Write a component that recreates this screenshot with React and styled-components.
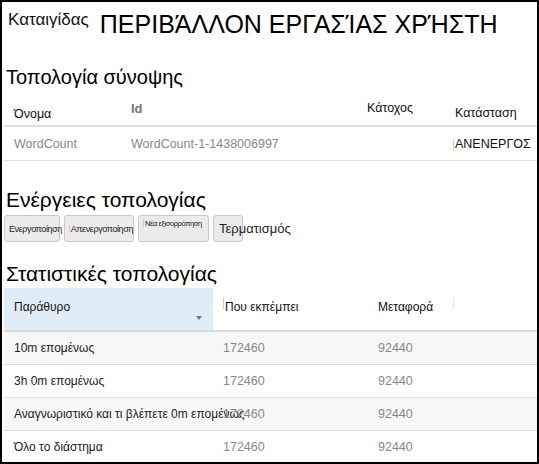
import React from "react";
import styled, { createGlobalStyle } from "styled-components";

const GlobalStyle = createGlobalStyle`
  html, body {
    margin: 0;
    padding: 0;
    background: #fff;
  }
  body {
    font-family: "Liberation Sans", Arial, sans-serif;
    color: #222;
  }
`;

const Frame = styled.div`
  height: 464px;
  box-sizing: border-box;
  border: 2px solid #000;
  padding: 8px 0 0 2px;
  overflow: hidden;
`;

const TitleBar = styled.div`
  display: flex;
  align-items: flex-start;
  margin-left: 4px;
`;

const Brand = styled.span`
  font-size: 17px;
  line-height: 20px;
  color: #111;
`;

const PageTitle = styled.h1`
  margin: 0 0 0 11px;
  font-size: 25px;
  font-weight: normal;
  line-height: 28px;
  color: #000;
`;

const SectionTitle = styled.h2`
  margin: ${(p) => p.$top}px 0 0 2px;
  font-size: ${(p) => p.$size || 20}px;
  font-weight: normal;
  line-height: 24px;
  color: #000;
`;

const Caret = styled.span`
  display: inline-block;
  width: 1px;
  height: ${(p) => p.$h || 10}px;
  margin-right: 1px;
  background: ${(p) => p.$color || "#f3c48c"};
  vertical-align: middle;
`;

/* summary table */
const SummaryHead = styled.div`
  display: grid;
  grid-template-columns: 117px 236px 88px 1fr;
  height: 30px;
  margin-top: 6px;
  border-bottom: 2px solid #ddd;
`;

const SummaryHeadCell = styled.div`
  padding: ${(p) => p.$pad}px 10px 0;
  font-size: ${(p) => (p.$bold ? 13 : 12.5)}px;
  font-weight: ${(p) => (p.$bold ? "bold" : "normal")};
  line-height: 18px;
  color: ${(p) => (p.$bold ? "#777" : "#111")};
`;

const SummaryRow = styled.div`
  display: grid;
  grid-template-columns: 117px 236px 88px 1fr;
  height: 33px;
  border-bottom: 1px solid #ddd;
`;

const SummaryCell = styled.div`
  padding: 8px 10px 0;
  font-size: 12.5px;
  line-height: 18px;
  white-space: nowrap;
  color: ${(p) => (p.$dark ? "#111" : "#888")};
`;

/* actions */
const ActionBar = styled.div`
  display: flex;
  gap: 4px;
  margin-top: 3px;
`;

const ActionButton = styled.button`
  box-sizing: border-box;
  width: ${(p) => p.$w}px;
  height: 27px;
  margin: 0;
  padding: ${(p) => (p.$top ? 3 : 0)}px 0 0 4px;
  display: flex;
  align-items: ${(p) => (p.$top ? "flex-start" : "center")};
  background: #ebebeb;
  border: 1px solid #c9c9c9;
  border-radius: 3px;
  font-family: inherit;
  font-size: ${(p) => p.$size}px;
  letter-spacing: ${(p) => (p.$size < 10 ? "-0.4px" : "0")};
  color: #222;
  white-space: nowrap;
  overflow: visible;
  text-align: left;
`;

/* stats table */
const StatsHead = styled.div`
  display: grid;
  grid-template-columns: 209px 155px 81px 1fr;
  height: 42px;
  margin-top: 2px;
  border-bottom: 2px solid #d9d9d9;
`;

const StatsHeadCell = styled.div`
  position: relative;
  display: flex;
  align-items: flex-start;
  padding: 10px;
  font-size: 12px;
  line-height: 18px;
  color: #111;
  background: ${(p) => (p.$active ? "#e1edf6" : "transparent")};
`;

const SortArrow = styled.span`
  position: absolute;
  right: 11px;
  bottom: 10px;
  width: 0;
  height: 0;
  border-left: 3.5px solid transparent;
  border-right: 3.5px solid transparent;
  border-top: 4px solid #777;
`;

const StatsRow = styled.div`
  display: grid;
  grid-template-columns: 209px 155px 81px 1fr;
  height: 32px;
  border-bottom: 1px solid #ddd;
  background: ${(p) => (p.$striped ? "#f7f7f7" : "#fff")};
`;

const StatsCell = styled.div`
  display: flex;
  align-items: center;
  padding: 0 10px;
  white-space: nowrap;
  font-size: ${(p) => (p.$label ? 12 : 12.5)}px;
  color: ${(p) => (p.$label ? "#222" : "#888")};
`;

const stats = [
  { label: "10m επομένως", emitted: "172460", transferred: "92440" },
  { label: "3h 0m επομένως", emitted: "172460", transferred: "92440" },
  { label: "Αναγνωριστικό και τι βλέπετε 0m επομένως", emitted: "172460", transferred: "92440" },
  { label: "Όλο το διάστημα", emitted: "172460", transferred: "92440" },
];

export default function App() {
  return (
    <Frame>
      <GlobalStyle />
      <TitleBar>
        <Brand>Καταιγίδας</Brand>
        <PageTitle>ΠΕΡΙΒΆΛΛΟΝ ΕΡΓΑΣΊΑΣ ΧΡΉΣΤΗ</PageTitle>
      </TitleBar>

      <SectionTitle $top={27}>Τοπολογία σύνοψης</SectionTitle>
      <SummaryHead>
        <SummaryHeadCell $pad={10}>Όνομα</SummaryHeadCell>
        <SummaryHeadCell $pad={5} $bold>Id</SummaryHeadCell>
        <SummaryHeadCell $pad={4}>Κάτοχος</SummaryHeadCell>
        <SummaryHeadCell $pad={9}>Κατάσταση</SummaryHeadCell>
      </SummaryHead>
      <SummaryRow>
        <SummaryCell>WordCount</SummaryCell>
        <SummaryCell>WordCount-1-1438006997</SummaryCell>
        <SummaryCell />
        <SummaryCell $dark style={{ paddingLeft: 8 }}>
          <Caret />ΑΝΕΝΕΡΓΟΣ
        </SummaryCell>
      </SummaryRow>

      <SectionTitle $top={27} $size={21}>Ενέργειες τοπολογίας</SectionTitle>
      <ActionBar>
        <ActionButton $w={56} $size={9}>Ενεργοποίηση</ActionButton>
        <ActionButton $w={70} $size={9}>
          <Caret $h={8} />Απενεργοποίηση
        </ActionButton>
        <ActionButton $w={71} $size={7.5} $top>
          <Caret $h={8} />Νέα εξισορρόπηση
        </ActionButton>
        <ActionButton $w={30} $size={13}>
          <Caret $h={11} />Τερματισμός
        </ActionButton>
      </ActionBar>

      <SectionTitle $top={20} $size={21}>Στατιστικές τοπολογίας</SectionTitle>
      <StatsHead>
        <StatsHeadCell $active>
          Παράθυρο
          <SortArrow />
        </StatsHeadCell>
        <StatsHeadCell>
          <Caret $h={11} />Που εκπέμπει
        </StatsHeadCell>
        <StatsHeadCell>Μεταφορά</StatsHeadCell>
        <StatsHeadCell style={{ paddingLeft: 4 }}>
          <Caret $h={11} $color="#c9f1f1" />
        </StatsHeadCell>
      </StatsHead>
      {stats.map((s, i) => (
        <StatsRow key={s.label} $striped={i % 2 === 0}>
          <StatsCell $label>{s.label}</StatsCell>
          <StatsCell>{s.emitted}</StatsCell>
          <StatsCell>{s.transferred}</StatsCell>
          <StatsCell />
        </StatsRow>
      ))}
    </Frame>
  );
}
